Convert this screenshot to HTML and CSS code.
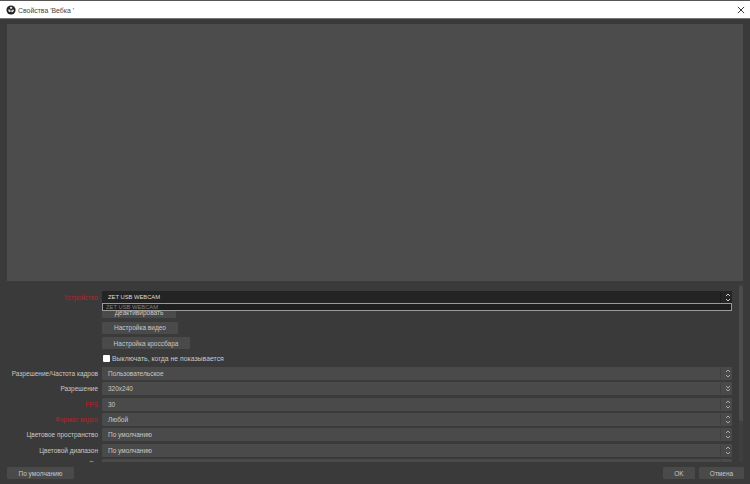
FILE: index.html
```html
<!DOCTYPE html>
<html lang="ru">
<head>
<meta charset="utf-8">
<title>Свойства 'Вебка '</title>
<link rel="stylesheet" href="styles.css">
</head>
<body>
<div class="window">
  <header class="titlebar">
    <svg class="logo" viewBox="0 0 12 12"><circle cx="6" cy="6" r="5.5" fill="#222"/><path d="M6 2.2a2 2 0 0 1 1.9 1.5L6 5 4.4 3.4A2 2 0 0 1 6 2.2zM3 5.2l2.3.6.3 2.6a2.2 2.2 0 0 1-2.6-3.2zM9.2 5.4a2.2 2.2 0 0 1-2.9 3L6.6 6z" fill="#ddd"/></svg>
    <span class="title">Свойства 'Вебка '</span>
    <svg class="close" viewBox="0 0 9 9"><path d="M1 1l7 7M8 1L1 8" stroke="#333" stroke-width="1.1" fill="none"/></svg>
  </header>
  <main class="content">
    <div class="preview"></div>
    <section class="props">
      <div class="form">
        <div class="row device">
          <label class="lbl red">Устройство</label>
          <div class="combo dark">
            <span class="caps">ZET USB WEBCAM</span>
            <svg class="arrows" viewBox="0 0 7 11"><path d="M1.500 4l2-2 2 2M1.500 7l2 2 2-2" stroke="#ccc" fill="none"/></svg>
            <div class="popup">ZET USB WEBCAM</div>
          </div>
        </div>
        <div class="row btnrow first"><span class="lbl"></span><button class="btn w1">Деактивировать</button></div>
        <div class="row btnrow"><span class="lbl"></span><button class="btn w2">Настройка видео</button></div>
        <div class="row btnrow"><span class="lbl"></span><button class="btn w3">Настройка кроссбара</button></div>
        <div class="row check"><span class="lbl"></span><span class="box"></span><span class="checktext">Выключать, когда не показывается</span></div>
        <div class="row field"><label class="lbl">Разрешение/Частота кадров</label><div class="combo"><span>Пользовательское</span><svg class="arrows" viewBox="0 0 7 11"><path d="M1.500 4l2-2 2 2M1.500 7l2 2 2-2" stroke="#aaa" fill="none"/></svg></div></div>
        <div class="row field"><label class="lbl">Разрешение</label><div class="combo"><span>320x240</span><svg class="arrows" viewBox="0 0 7 11"><path d="M1.500 3l2 2 2-2M1.500 6l2 2 2-2" stroke="#aaa" fill="none"/></svg></div></div>
        <div class="row field"><label class="lbl red">FPS</label><div class="combo"><span>30</span><svg class="arrows" viewBox="0 0 7 11"><path d="M1.500 4l2-2 2 2M1.500 7l2 2 2-2" stroke="#aaa" fill="none"/></svg></div></div>
        <div class="row field"><label class="lbl red">Формат видео</label><div class="combo"><span>Любой</span><svg class="arrows" viewBox="0 0 7 11"><path d="M1.500 4l2-2 2 2M1.500 7l2 2 2-2" stroke="#aaa" fill="none"/></svg></div></div>
        <div class="row field"><label class="lbl">Цветовое пространство</label><div class="combo"><span>По умолчанию</span><svg class="arrows" viewBox="0 0 7 11"><path d="M1.500 4l2-2 2 2M1.500 7l2 2 2-2" stroke="#aaa" fill="none"/></svg></div></div>
        <div class="row field"><label class="lbl">Цветовой диапазон</label><div class="combo"><span>По умолчанию</span><svg class="arrows" viewBox="0 0 7 11"><path d="M1.500 4l2-2 2 2M1.500 7l2 2 2-2" stroke="#aaa" fill="none"/></svg></div></div>
        <div class="row field"><label class="lbl"><svg class="info" viewBox="0 0 10 10"><circle cx="5" cy="5" r="4.300" stroke="#ccc" fill="none"/></svg></label><div class="combo"><span>Авто</span><svg class="arrows" viewBox="0 0 7 11"><path d="M1.500 4l2-2 2 2M1.500 7l2 2 2-2" stroke="#aaa" fill="none"/></svg></div></div>
      </div>
      <div class="scrollbar"><div class="thumb"></div></div>
    </section>
    <footer class="footer">
      <button class="btn defaults">По умолчанию</button>
      <div class="actions">
        <button class="btn ok">OK</button>
        <button class="btn cancel">Отмена</button>
      </div>
    </footer>
  </main>
</div>
</body>
</html>
```
FILE: styles.css
```css
* { box-sizing: border-box; }
html, body { margin: 0; padding: 0; }
body { width: 750px; height: 484px; overflow: hidden; background: #3a3a3a; font-family: "Liberation Sans", Arial, sans-serif; font-size: 6.500px; color: #c8c8c8; }
.window { display: flex; flex-direction: column; height: 484px; }
.titlebar { flex: none; height: 19px; display: flex; align-items: center; padding: 1px 4px 0 6px; background: #fff; border-top: 1px solid #555; border-bottom: 1px solid #777; color: #444; font-size: 6.900px; }
.logo { width: 10px; height: 10px; margin-right: 2px; }
.title { flex: 1; }
.close { width: 8px; height: 8px; margin-right: 1px; }
.content { flex: 1; display: flex; flex-direction: column; min-height: 0; padding: 5px 7px 0; background: #3a3a3a; }
.preview { flex: none; height: 257px; background: #4c4c4c; }
.props { flex: none; height: 178px; margin-top: 3px; display: flex; overflow: hidden; }
.form { flex: none; width: 725px; padding-top: 6px; }
.row { display: flex; align-items: center; }
.lbl { flex: none; width: 92px; margin-right: 3px; padding-right: 1px; text-align: right; white-space: nowrap; }
.red { color: #b8222a; }
.combo { position: relative; flex: 1; height: 13px; display: flex; align-items: center; padding-left: 6px; background: #4a4a4a; border-radius: 1px; }
.combo span { flex: 1; }
.arrows { width: 12px; height: 11px; padding-left: 3px; border-left: 1px solid #404040; }
.dark { background: #242424; color: #dcdcdc; }
.caps { font-size: 5.800px; }
.dark .arrows { border-left-color: #1c1c1c; }
.device { height: 14px; }
.popup { position: absolute; left: 0; right: 0; top: 12px; height: 8px; padding-left: 3px; line-height: 6px; font-size: 5.800px; background: #1e1e1e; border: 1px solid #9a9a9a; color: #808080; }
.btnrow { height: 12px; margin-top: 3.500px; }
.btnrow.first { margin-top: 2px; }
.btn { border: 0; padding: 0; height: 12px; border-radius: 1px; background: #4a4a4a; color: #c8c8c8; font: inherit; font-size: 6.500px; text-align: center; }
.w1 { width: 74px; }
.w2 { width: 76px; }
.w3 { width: 88px; }
.check { height: 10px; margin-top: 4px; }
.check .lbl { width: 92px; margin-right: 4px; }
.box { flex: none; width: 7px; height: 7px; margin-right: 2px; background: #fff; border-radius: 1px; }
.checktext { font-size: 6.900px; }
.field { margin-top: 2.350px; height: 13px; }
.check + .field { margin-top: 4px; }
.info { width: 9px; height: 9px; margin-right: 2px; vertical-align: middle; }
.scrollbar { flex: none; width: 6px; margin-left: 7px; background: #3f3f3f; }
.thumb { height: 135px; margin-top: 2px; background: #4c4c4c; border-radius: 2px; }
.footer { flex: none; height: 22px; display: flex; justify-content: space-between; align-items: flex-start; padding-top: 5px; margin-right: -1px; }
.defaults { width: 67px; }
.actions { display: flex; gap: 4px; }
.ok { width: 32px; }
.cancel { width: 45px; }
```
